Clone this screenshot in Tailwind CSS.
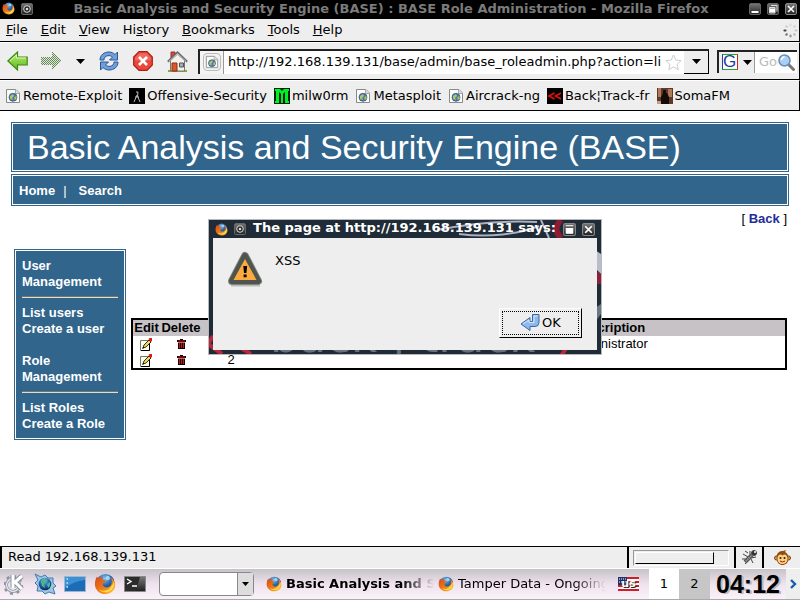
<!DOCTYPE html>
<html lang="en">
<head>
    <meta charset="UTF-8">
    <meta name="viewport" content="width=device-width, initial-scale=1.0">
    <title>Basic Analysis and Security Engine (BASE) : BASE Role Administration</title>
    <script src="https://cdn.jsdelivr.net/npm/@tailwindcss/browser@4"></script>
</head>
<body class="min-h-screen flex flex-col bg-white text-black text-[13px] leading-4 font-['DejaVu_Sans',sans-serif] overflow-hidden">

    <!-- Shared icons -->
    <svg class="absolute size-0" aria-hidden="true">
        <defs>
            <radialGradient id="blueBall" cx="45%" cy="25%" r="70%">
                <stop offset="0" stop-color="#7fc4ee"/>
                <stop offset="0.5" stop-color="#2e6cb5"/>
                <stop offset="1" stop-color="#122c66"/>
            </radialGradient>
            <linearGradient id="foxFur" x1="0" y1="0" x2="1" y2="1">
                <stop offset="0" stop-color="#d8481a"/>
                <stop offset="0.6" stop-color="#f08418"/>
                <stop offset="1" stop-color="#ffd23c"/>
            </linearGradient>
            <linearGradient id="btnDark" x1="0" y1="0" x2="0" y2="1">
                <stop offset="0" stop-color="#777"/>
                <stop offset="1" stop-color="#222"/>
            </linearGradient>
            <linearGradient id="greenArrow" x1="0" y1="0" x2="0" y2="1">
                <stop offset="0" stop-color="#c0f078"/>
                <stop offset="1" stop-color="#58b818"/>
            </linearGradient>
            <pattern id="dither" width="2" height="2" patternUnits="userSpaceOnUse">
                <path d="M0 0h2v2H0z" fill="#e4e8e0"/>
                <path d="M0 0h1v1H0zM1 1h1v1H1z" fill="#5f8a50"/>
            </pattern>
        </defs>
        <symbol id="firefox" viewBox="0 0 24 24">
            <circle cx="12.500" cy="11" r="10" fill="url(#blueBall)"/>
            <path d="M14 3c3 0 4 2 3 4l-3 1-2-2z" fill="#9fd6f5"/>
            <path d="M3 4c1 1 2 1.500 3.500 1.500C8 4 9 4 10 4 9 5.500 9 6.500 10 7.500l3 1-2 2.500c-2 0-2 2.500 0 4 3 2 7 0 8-3 1-3 0-6-1-8 4 3 5.500 7 5 11-1 5-6 8-11 8S1.500 19 1 13C.8 9 2 6 3 4z" fill="url(#foxFur)"/>
            <path d="M22 9c1 6-2 11-8 12-4 .5-7-1-9-3 4 2 9 2 12-1 2-2 4-5 5-8z" fill="#ffd94a"/>
        </symbol>
        <symbol id="page" viewBox="0 0 16 16">
            <path d="M1.500 1.500h9.500l3.500 3.500v9.500h-13z" fill="#fbfbf8" stroke="#8a8a86"/>
            <path d="M10.500 1.500v4h4" fill="#ddd" stroke="#aaa"/>
            <circle cx="8" cy="9.300" r="4" fill="#4a78b8" stroke="#2c4f86" stroke-width=".7"/>
            <path d="M5 8l3-2 1 2-2 2 1 2-3-1zM9.500 9l2-1v3l-2 1z" fill="#b4c850"/>
        </symbol>
        <symbol id="winMenu" viewBox="0 0 12 12">
            <rect x=".5" y=".5" width="11" height="11" rx="1.500" fill="url(#btnDark)" stroke="#666"/>
            <circle cx="6" cy="6" r="3.300" fill="#222" stroke="#ddd"/>
            <circle cx="6" cy="6" r="1.300" fill="#ddd"/>
        </symbol>
        <symbol id="winMin" viewBox="0 0 12 12">
            <rect x=".5" y=".5" width="11" height="11" rx="1.500" fill="url(#btnDark)" stroke="#666"/>
            <path d="M2.500 9h7" stroke="#fff" stroke-width="2"/>
        </symbol>
        <symbol id="winRestore" viewBox="0 0 12 12">
            <rect x=".5" y=".5" width="11" height="11" rx="1.500" fill="url(#btnDark)" stroke="#666"/>
            <path d="M4 2.500h6v6M2.500 4.500h5.500v5.500H2.500z" fill="none" stroke="#ddd"/>
            <path d="M3 5.500h5v4H3z" fill="#fff"/>
        </symbol>
        <symbol id="winMax" viewBox="0 0 12 12">
            <rect x=".5" y=".5" width="11" height="11" rx="1.500" fill="url(#btnDark)" stroke="#888"/>
            <path d="M2.500 2.500h7M3 5h6v4.500H3z" fill="#fff" stroke="#fff"/>
        </symbol>
        <symbol id="winClose" viewBox="0 0 12 12">
            <rect x=".5" y=".5" width="11" height="11" rx="1.500" fill="url(#btnDark)" stroke="#888"/>
            <path d="M3 3l6 6M9 3l-6 6" stroke="#fff" stroke-width="1.600"/>
        </symbol>
        <symbol id="pencil" viewBox="0 0 13 13">
            <path d="M.5 2.500h9v10H.5z" fill="#ffffe8" stroke="#777"/>
            <path d="M9.500 5v7.500H1" fill="none" stroke="#000"/>
            <path d="M3 10l1-3 5-5 2 2-5 5z" fill="#f0d860" stroke="#000" stroke-width=".8"/>
            <path d="M8.500 1l1-1H12v2.500l-1 1.500z" fill="#e01818"/>
            <path d="M2 11l2-1-1-1z" fill="#000"/>
        </symbol>
        <symbol id="trash" viewBox="0 0 9 10">
            <path d="M0 1h3V0h3v1h3v2H0zM1 3.500h7V10H1z" fill="#100"/>
            <path d="M1 1.500h7v1H1zM2 4h1v5H2zM4 4h1v5H4zM6 4h1v5H6z" fill="#d01010"/>
        </symbol>
    </svg>

    <!-- Window title bar -->
    <header class="h-[19px] shrink-0 bg-black flex items-center gap-1 pl-0.5 pr-[3px] pb-0.5">
        <svg class="size-[13px]"><use href="#firefox"/></svg>
        <svg class="ml-0.5 size-3"><use href="#winMenu"/></svg>
        <h1 class="flex-1 text-center font-bold text-[#7b7b7b] whitespace-nowrap">Basic Analysis and Security Engine (BASE) : BASE Role Administration - Mozilla Firefox</h1>
        <div class="flex gap-1.5">
            <button aria-label="Minimize"><svg class="size-3"><use href="#winMin"/></svg></button>
            <button aria-label="Restore"><svg class="size-3"><use href="#winRestore"/></svg></button>
            <button aria-label="Close"><svg class="size-3"><use href="#winClose"/></svg></button>
        </div>
    </header>

    <!-- Menu bar -->
    <nav class="h-[23px] shrink-0 bg-[#eee] border-b border-black border-r flex items-center justify-between pl-1.5 pr-px">
        <div class="flex gap-[13px]">
            <button><u>F</u>ile</button>
            <button><u>E</u>dit</button>
            <button><u>V</u>iew</button>
            <button>Hi<u>s</u>tory</button>
            <button><u>B</u>ookmarks</button>
            <button><u>T</u>ools</button>
            <button><u>H</u>elp</button>
        </div>
        <svg class="size-[15px]" viewBox="0 0 15 15" stroke-width="2.200" stroke-linecap="round">
            <path d="M7.500 1.500v1" stroke="#ddd"/><path d="M11.700 3.300l-.5.500" stroke="#d4d4d4"/>
            <path d="M13.500 7.500h-1" stroke="#c8c8c8"/><path d="M11.700 11.700l-.5-.5" stroke="#bbb"/>
            <path d="M7.500 13.500v-1" stroke="#999"/><path d="M3.300 11.700l.5-.5" stroke="#777"/>
            <path d="M1.500 7.500h1" stroke="#444"/><path d="M3.300 3.300l.5.500" stroke="#ccc"/>
        </svg>
    </nav>

    <!-- Navigation toolbar -->
    <div class="h-[38px] shrink-0 bg-[#eee] border-t border-t-white border-b border-black border-r flex items-center pl-[7px] pr-0.5">
        <button aria-label="Back">
            <svg class="w-[21px] h-5" viewBox="0 0 21 20"><path d="M.8 10L10.500 1v5h9.700v8h-9.700v5z" fill="url(#greenArrow)" stroke="#3f8a14" stroke-width="1.200"/><path d="M3 10l6.500-6v3h9.500" fill="none" stroke="#dcfab0"/></svg>
        </button>
        <button aria-label="Forward" class="ml-[13px]">
            <svg class="w-[21px] h-5" viewBox="0 0 21 20" shape-rendering="crispEdges"><path d="M20.500 10L11 1v5H0v8h11v5z" fill="url(#dither)"/></svg>
        </button>
        <button aria-label="Recent pages" class="ml-3.5">
            <svg class="w-[9px] h-[5px]" viewBox="0 0 9 5"><path d="M0 0h9L4.500 5z"/></svg>
        </button>
        <button aria-label="Reload" class="ml-3.5">
            <svg class="size-5" viewBox="0 0 20 20" fill="#6fa0dc" stroke="#2d5594" stroke-width="1"><path d="M1 9C1 4 5 1 10 1c2.500 0 4.500 1 6 2.500L18.500 1v8h-8l3-3C12 4.800 10.500 4.500 9 4.700 6.500 5 5 6.500 5 9z"/><path d="M19 11c0 5-4 8-9 8-2.500 0-4.500-1-6-2.500L1.500 19v-8h8l-3 3c1.500 1.200 3 1.500 4.500 1.300 2.500-.3 4-1.800 4-4.300z"/></svg>
        </button>
        <button aria-label="Stop" class="ml-3.5">
            <svg class="size-5" viewBox="0 0 20 20"><path d="M6 .7h8L19.300 6v8L14 19.300H6L.7 14V6z" fill="#e8483a" stroke="#b01c14" stroke-width="1.200"/><path d="M6.500 2.200h7l4.300 4.300v3H2.200v-3z" fill="#f48070" opacity=".6"/><path d="M6 6l8 8M14 6l-8 8" stroke="#fff" stroke-width="2.600"/></svg>
        </button>
        <button aria-label="Home" class="ml-3.5">
            <svg class="size-[21px]" viewBox="0 0 21 21"><path d="M1 20h19" stroke="#8aa830" stroke-width="2"/><path d="M4 1h4v6H4z" fill="#d84a28" stroke="#933"/><path d="M3.500 9.500L10.500 3l7 6.500V20h-14z" fill="#f4f2ea" stroke="#777"/><path d="M.8 10.800L10.500 1.500l9.700 9.300" fill="none" stroke="#666" stroke-width="2"/><path d="M1.800 10.500L10.500 2.500l8.700 8" fill="none" stroke="#ddd" stroke-width=".8"/><path d="M5 12h5v8H5z" fill="#e0562c" stroke="#8c2f12"/><path d="M12.500 12h4v4h-4z" fill="#9cb0b8" stroke="#555"/></svg>
        </button>

        <div class="ml-2.5 flex-1 h-[25px] flex min-w-0 bg-white border-t-2 border-l-2 border-[#222]">
            <span class="w-6 shrink-0 bg-[#f4f4f4] border-r border-[#999] flex items-center justify-center">
                <span class="p-px border border-[#bbb] rounded-sm"><svg class="size-[14px]"><use href="#page"/></svg></span>
            </span>
            <input type="text" aria-label="Address" value="http://192.168.139.131/base/admin/base_roleadmin.php?action=list" class="flex-1 min-w-0 ml-1 outline-none bg-white">
            <button aria-label="Bookmark this page" class="ml-1 mr-0.5">
                <svg class="size-[17px]" viewBox="0 0 17 17"><path d="M8.500 1l2.300 5 5.300.6-4 3.700 1.100 5.400-4.700-2.800-4.700 2.800 1.100-5.400-4-3.700 5.300-.6z" fill="#fff" stroke="#ccc"/></svg>
            </button>
            <button aria-label="Show history" class="w-[25px] shrink-0 bg-[#eee] border-r border-b border-black flex items-center justify-center">
                <svg class="w-[9px] h-[5px]" viewBox="0 0 9 5"><path d="M0 0h9L4.500 5z"/></svg>
            </button>
        </div>

        <div class="ml-2 w-20 shrink-0 h-[23px] flex items-center bg-white border-t-2 border-l-2 border-[#222]">
            <button aria-label="Choose search engine" class="h-full w-9 bg-[#eee] border-r border-[#999] flex items-center justify-around">
                <span class="size-4 bg-white border border-t-[#22aa22] border-r-[#d02020] border-b-[#22aa22] border-l-[#1a3fc0] text-[#1b3a9c] text-[17px] leading-[14px] font-['Liberation_Sans',sans-serif]">G</span>
                <svg class="w-[9px] h-[5px]" viewBox="0 0 9 5"><path d="M0 0h9L4.500 5z"/></svg>
            </button>
            <input type="text" aria-label="Search" placeholder="Google" class="w-[19px] ml-1 outline-none placeholder:text-[#bbb]">
            <button aria-label="Go">
                <svg class="size-[17px]" viewBox="0 0 17 17"><path d="M10 10l5.500 5.500" stroke="#777" stroke-width="3" stroke-linecap="round"/><circle cx="6.500" cy="6.500" r="5.500" fill="#a9d0f4" stroke="#6a8db8" stroke-width="1.500"/><path d="M3.500 6a3 3 0 013-3" stroke="#fff" stroke-width="1.500" fill="none"/></svg>
            </button>
        </div>
    </div>

    <!-- Bookmarks toolbar -->
    <nav class="h-[31px] shrink-0 bg-[#eee] border-t border-t-white border-b border-black border-r flex items-center gap-[7px] pl-[5px] whitespace-nowrap">
        <a href="#" class="flex items-center gap-0.5"><svg class="size-4"><use href="#page"/></svg>Remote-Exploit</a>
        <a href="#" class="flex items-center gap-0.5">
            <svg class="size-4" viewBox="0 0 16 16"><path d="M0 0h16v16H0z"/><path d="M7 4h2l-.5 4L11 14M8 7l-3 7M6 9h4" stroke="#bbb" fill="none"/></svg>Offensive-Security</a>
        <a href="#" class="flex items-center gap-0.5">
            <svg class="size-4" viewBox="0 0 16 16"><path d="M0 0h16v16H0z" fill="#021"/><path d="M1 1h5l2 2 2-2h5v2h-1v10h1v2h-4V4L9 6v9H7V6L5 4v11H1v-2h1V3H1z" fill="#00f020"/></svg>milw0rm</a>
        <a href="#" class="flex items-center gap-0.5"><svg class="size-4"><use href="#page"/></svg>Metasploit</a>
        <a href="#" class="flex items-center gap-0.5"><svg class="size-4"><use href="#page"/></svg>Aircrack-ng</a>
        <a href="#" class="flex items-center gap-0.5">
            <svg class="size-4" viewBox="0 0 16 16"><path d="M0 0h16v16H0z"/><path d="M7.500 5L2 8l5.500 3M14 5L8.500 8l5.500 3" stroke="#e01010" stroke-width="1.800" fill="none"/></svg>Back¦Track-fr</a>
        <a href="#" class="flex items-center gap-0.5">
            <svg class="size-4" viewBox="0 0 16 16"><path d="M0 0h16v16H0z" fill="#5c3a2c"/><path d="M1 0h3v9H1zM11 1h4v8h-4z" fill="#b07a58"/><path d="M4 16V9l2-4h4l2 4v7zM6 2h3v3H6z" fill="#150c0a"/><path d="M0 13h4v3H0z" fill="#c0a088"/></svg>SomaFM</a>
    </nav>

    <!-- Page -->
    <main class="relative flex-1 bg-white px-3 pt-3 font-['Liberation_Sans',sans-serif]">
        <h2 class="h-12 flex items-center pl-3.5 bg-[#31658c] border border-white ring-1 ring-[#31658c] text-white text-[34px] whitespace-nowrap">Basic Analysis and Security Engine (BASE)</h2>
        <div class="mt-1 h-[30px] flex items-center gap-2 pl-1.5 pt-0.5 bg-[#31658c] border border-white ring-1 ring-[#31658c] text-white">
            <a href="#" class="font-bold">Home</a>
            <span class="mr-1">|</span>
            <a href="#" class="font-bold">Search</a>
        </div>
        <p class="mt-1.5 pr-px text-right">[ <a href="#" class="font-bold text-[#212d9c]">Back</a> ]</p>

        <div class="mt-[23px] ml-[3px] mr-px flex items-start gap-1.5">
            <aside class="w-[110px] shrink-0 bg-[#31658c] border border-white ring-1 ring-[#31658c] text-white font-bold px-1.5 pt-[7px] pb-1.5">
                <h3>User Management</h3>
                <hr class="mt-1.5 mb-[7px] border-t border-t-[#776] border-b border-b-[#ddd]">
                <a href="#" class="block">List users</a>
                <a href="#" class="block">Create a user</a>
                <h3 class="mt-4">Role Management</h3>
                <hr class="mt-1.5 mb-[7px] border-t border-t-[#776] border-b border-b-[#ddd]">
                <a href="#" class="block">List Roles</a>
                <a href="#" class="block">Create a Role</a>
            </aside>
            <table class="mt-[68px] flex-1 table-fixed border-separate border-spacing-0 border-2 border-black text-center">
                <colgroup>
                    <col class="w-[27px]">
                    <col class="w-[42px]">
                    <col class="w-[58px]">
                    <col class="w-[174px]">
                    <col>
                </colgroup>
                <thead class="bg-[#c6c2c6]">
                    <tr><th>Edit</th><th>Delete</th><th></th><th></th><th>Description</th></tr>
                </thead>
                <tbody>
                    <tr class="h-4">
                        <td><a href="#" aria-label="Edit role 1"><svg class="size-[13px] mx-auto"><use href="#pencil"/></svg></a></td>
                        <td><a href="#" aria-label="Delete role 1"><svg class="w-[9px] h-2.5 mx-auto"><use href="#trash"/></svg></a></td>
                        <td></td><td></td><td>Administrator</td>
                    </tr>
                    <tr class="h-4">
                        <td><a href="#" aria-label="Edit role 2"><svg class="size-[13px] mx-auto"><use href="#pencil"/></svg></a></td>
                        <td><a href="#" aria-label="Delete role 2"><svg class="w-[9px] h-2.5 mx-auto"><use href="#trash"/></svg></a></td>
                        <td>2</td><td></td><td></td>
                    </tr>
                </tbody>
            </table>
        </div>

        <section role="alertdialog" aria-labelledby="dlgTitle" class="absolute left-[208px] top-[108px] w-[394px] h-[136px] border border-[#b8b8bc] bg-[#1f2b36] overflow-hidden flex flex-col px-1 pb-1 font-['DejaVu_Sans',sans-serif]">
            <svg class="absolute left-0 top-0 w-[392px] h-[134px]" viewBox="0 0 392 134" fill="none">
                <path d="M228 10c30-6 60-10 100-8M250 14c30 4 60 0 80-8M332 0l8 18" stroke="#a9b2c2" stroke-width="2"/>
                <path d="M352 0c-6 6-6 12 0 18" stroke="#8c1c34" stroke-width="6"/>
                <path d="M386 30l6 4v20l-6-6z" fill="#b8bccb"/>
                <path d="M386 50l6 4v10h-6z" fill="#8c2038"/>
                <path d="M386 88l6-4v10l-6 8" fill="#6a7684"/>
                <path d="M4 116l-5 8 14 10M32 128l10 6M360 124l-8 12" stroke="#b8283c" stroke-width="4"/>
            </svg>
            <span aria-hidden="true" class="absolute left-[61px] bottom-[-5px] text-[45px] leading-[44px] text-[#66717f] whitespace-nowrap">back | track</span>
            <div class="relative h-[18px] shrink-0 flex items-center gap-1.5 px-0.5">
                <svg class="size-[13px]"><use href="#firefox"/></svg>
                <svg class="size-3"><use href="#winMenu"/></svg>
                <h2 id="dlgTitle" class="flex-1 pb-0.5 text-center font-bold text-white whitespace-nowrap">The page at http://192.168.139.131 says:</h2>
                <button aria-label="Maximize"><svg class="size-[13px]"><use href="#winMax"/></svg></button>
                <button aria-label="Close dialog"><svg class="size-[13px]"><use href="#winClose"/></svg></button>
            </div>
            <div class="relative flex-1 bg-[#eee] pl-[14px] pr-[15px] py-3 flex flex-col justify-between">
                <div class="flex gap-3">
                    <svg class="mt-px size-9" viewBox="0 0 36 36">
                        <path d="M4 34h29" stroke="#bbb" stroke-width="3"/>
                        <path d="M18 5L31 30H5z" fill="#fca83c" stroke="#80867e" stroke-width="8" stroke-linejoin="round"/>
                        <path d="M18 5L31 30H5z" fill="#fca83c" stroke="#4e554f" stroke-width="6" stroke-linejoin="round"/>
                        <path d="M18 8L29.500 29H6.500z" fill="#fcaa40"/>
                        <path d="M16.300 15h3.800l-.7 7h-2.400zM16.600 23.500h3v2.800h-3z" fill="#000"/>
                    </svg>
                    <p class="pt-[3px]">XSS</p>
                </div>
                <button class="self-end w-[83px] h-[30px] p-0.5 border border-t-white border-l-white border-r-black border-b-black bg-[#eee]">
                    <span class="h-full flex items-center justify-center gap-0.5 border border-dotted border-black">
                        <svg class="size-5" viewBox="0 0 20 20"><path d="M12.500 1.500h6.500v8q0 4-4 4h-5v4L1 11l9-6.500v4h2.500z" fill="#8fb9e8" stroke="#3a68a8"/><path d="M3 11l6-4v2.500h5V3h3.500" fill="none" stroke="#d8eafc"/></svg>
                        OK
                    </span>
                </button>
            </div>
        </section>
    </main>

    <!-- Status bar -->
    <footer class="h-[23px] shrink-0 bg-[#eee] border-t border-black flex border-b border-b-white">
        <p class="flex-1 border-l-2 border-black pl-1.5 pt-0.5">Read 192.168.139.131</p>
        <div class="w-[107px] border-l-2 border-black pl-1 pt-[3px]">
            <div role="progressbar" aria-label="Loading" aria-valuenow="86" class="w-24 h-4 p-px border border-t-[#999] border-l-[#999] border-white">
                <div class="h-full bg-[#eee] border border-t-white border-l-white border-black" style="width: 86%"></div>
            </div>
        </div>
        <div class="w-7 border-l-2 border-black flex items-center justify-center">
            <svg class="size-[17px]" viewBox="0 0 17 17" fill="none" stroke="#444"><path d="M2 5l5 3M1 10l6 0M4 15l4-4M9 2v5M15 8l-5 1M12 14l-2-4M7 4l-3-2" /><path d="M4 13l7-7" stroke="#555" stroke-width="4"/><path d="M5 12l6-6" stroke="#aaa" stroke-width="2" stroke-dasharray="1 1"/><circle cx="13" cy="4" r="2.500" fill="#333"/><circle cx="14" cy="3" r="1" fill="#fff" stroke="none"/></svg>
        </div>
        <div class="w-[38px] border-l-2 border-black flex items-center justify-center">
            <svg class="size-[17px]" viewBox="0 0 17 17"><circle cx="2.500" cy="9" r="2" fill="#e8a850" stroke="#6b3c10"/><circle cx="14.500" cy="9" r="2" fill="#e8a850" stroke="#6b3c10"/><path d="M2.500 8C3 3 6 2 9 2l3-1-1 2c2 1 3.500 3 3.500 6 0 5-3 7-6 7s-6-2-6-8z" fill="#8c4c14"/><path d="M3.500 9.500c0-4 3.500-5 5-3 1.500-2 5-1 5 3 0 4-2.500 5.500-5 5.500s-5-1.500-5-5.500z" fill="#ffd080"/><circle cx="6.500" cy="9" r="1" fill="#222"/><circle cx="10.500" cy="9" r="1" fill="#222"/><path d="M6 12q2.500 2 5 0" stroke="#922" fill="none"/></svg>
        </div>
    </footer>

    <!-- Desktop panel -->
    <div class="h-[31px] shrink-0 flex items-center bg-linear-to-b from-[#c6c2c8] via-[#efe2ee] to-[#faf2f8] border-b border-[#aaa] whitespace-nowrap">
        <div class="flex items-center gap-2 pl-1">
            <button aria-label="K menu">
                <svg class="size-[22px]" viewBox="0 0 22 22"><circle cx="9" cy="12" r="6.500" fill="none" stroke="#8b94a0" stroke-width="3"/><circle cx="9" cy="12" r="8.700" fill="none" stroke="#8b94a0" stroke-width="2.400" stroke-dasharray="3 3.800"/><circle cx="9" cy="12" r="6.500" fill="none" stroke="#e4e8ee" stroke-width="1.400"/><path d="M9 2v13M18 3l-7 6 7 7" fill="none" stroke="#8b94a0" stroke-width="5"/><path d="M9 2v13M18 3l-7 6 7 7" fill="none" stroke="#fff" stroke-width="3"/></svg>
            </button>
            <button aria-label="Konqueror">
                <svg class="size-[22px]" viewBox="0 0 22 22"><path d="M1 1l6 3 4-2 3 3 5 0 0 5 3 3-3 2 2 6-6-2-4 2-3-3-5 0 1-5-3-3 3-3z" fill="#9cc8e4" stroke="#3c7cac"/><circle cx="11" cy="11" r="6.300" fill="url(#blueBall)"/><path d="M7 8l4-3 2 3-3 3 1 4-3-2zM13 11l3-2v4l-2 2z" fill="#48b888"/></svg>
            </button>
            <button aria-label="Show desktop">
                <svg class="w-[22px] h-[17px]" viewBox="0 0 22 17"><path d="M.5.500h21v15H.5z" fill="#1c6cb8" stroke="#9bb8d0"/><path d="M1 1h20v3Q10 5 1 12z" fill="#3c90d4"/><path d="M2.500 3h1.500M2.500 7h1.500M2.500 11h1.500" stroke="#cfe8ff" stroke-width="1.500"/></svg>
            </button>
            <button aria-label="Firefox"><svg class="size-[22px]"><use href="#firefox"/></svg></button>
            <button aria-label="Terminal">
                <svg class="w-[22px] h-[17px]" viewBox="0 0 22 17"><path d="M.5.500h21v15H.5z" fill="#2c2c2c" stroke="#888"/><path d="M16 1h5v14h-9z" fill="url(#btnDark)"/><path d="M3 3l4 2.500L3 8M8 10h5" stroke="#fff" stroke-width="1.400" fill="none"/></svg>
            </button>
        </div>
        <div class="relative ml-[13px] w-[95px] h-6">
            <select aria-label="Run command" class="appearance-none size-full bg-white border border-[#888] rounded-sm"><option></option></select>
            <span class="pointer-events-none absolute right-px inset-y-px w-4 bg-[#ddd] border-l border-[#888] flex items-center justify-center">
                <svg class="w-[7px] h-1" viewBox="0 0 7 4"><path d="M0 0h7L3.500 4z"/></svg>
            </span>
        </div>
        <div class="ml-3 flex-1 min-w-0 flex gap-1">
            <button class="flex-1 min-w-0 flex items-center gap-1 font-bold text-left">
                <svg class="size-4 shrink-0"><use href="#firefox"/></svg>
                <span class="flex-1 overflow-hidden [mask-image:linear-gradient(to_right,#000_78%,transparent)]">Basic Analysis and S</span>
            </button>
            <button class="flex-1 min-w-0 flex items-center gap-1 text-left">
                <svg class="size-4 shrink-0"><use href="#firefox"/></svg>
                <span class="flex-1 overflow-hidden [mask-image:linear-gradient(to_right,#000_78%,transparent)]">Tamper Data - Ongoing</span>
            </button>
        </div>
        <button aria-label="Keyboard layout" class="relative ml-3 mr-2.5 w-[21px] h-[14px]">
            <svg class="w-[21px] h-[14px]" viewBox="0 0 21 14"><path d="M0 0h21v14H0z" fill="#fff"/><path d="M0 1h21M0 5h21M0 9h21M0 13h21" stroke="#d01c24" stroke-width="2"/><path d="M0 0h9v8H0z" fill="#20306c"/><path d="M1 2h8M1 5h8" stroke="#fff" stroke-dasharray="1 1"/></svg>
            <span class="absolute inset-0 text-center text-[11px] leading-[14px] font-bold text-white [text-shadow:1px_1px_0_#222]">us</span>
        </button>
        <button class="w-[30px] h-full bg-white">1</button>
        <button class="w-[31px] h-full bg-[#c6c6c6]">2</button>
        <time class="w-[76px] text-center text-[25px] leading-[28px] font-bold font-['Liberation_Sans',sans-serif] [text-shadow:2px_1px_0_#bbb]">04:12</time>
        <button aria-label="Hide panel" class="w-3.5 h-full bg-[#eee] flex items-center justify-center">
            <svg class="w-[7px] h-2.5" viewBox="0 0 7 10"><path d="M1 1l4 4-4 4" fill="none" stroke="#1c5cac" stroke-width="2.400"/></svg>
        </button>
    </div>
</body>
</html>
